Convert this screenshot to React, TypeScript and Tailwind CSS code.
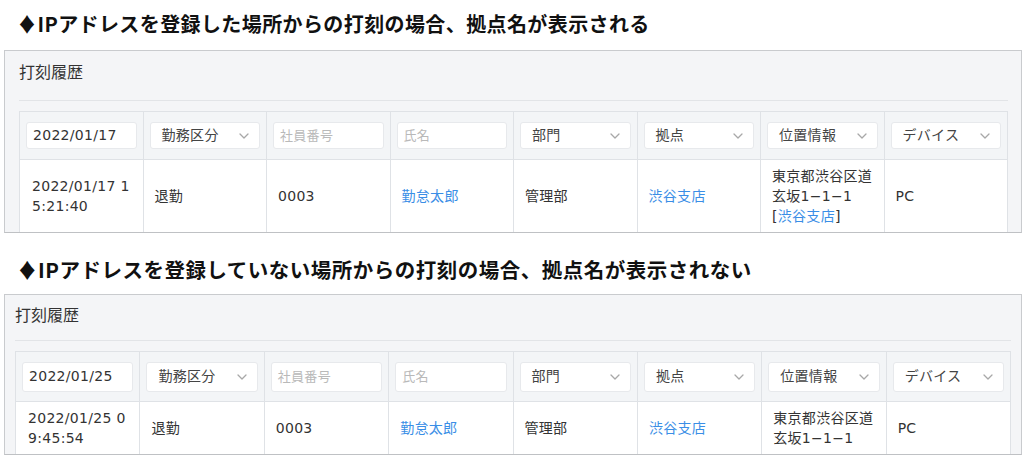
import React from 'react';

const FONT = '"DejaVu Sans", "Noto Sans CJK JP", sans-serif';
const HEAD_FONT = '"Noto Sans CJK JP", "DejaVu Sans", sans-serif';

type HeaderCell =
  | { kind: 'input'; text: string }
  | { kind: 'placeholder'; text: string }
  | { kind: 'select'; text: string };

const Chevron = () => (
  <svg width="10" height="6" viewBox="0 0 10 6" className="shrink-0">
    <path d="M1 1l4 4 4-4" stroke="#a8a8a8" strokeWidth="1.3" fill="none" strokeLinecap="round" strokeLinejoin="round" />
  </svg>
);

const headerCells = (date: string): HeaderCell[] => [
  { kind: 'input', text: date },
  { kind: 'select', text: '勤務区分' },
  { kind: 'placeholder', text: '社員番号' },
  { kind: 'placeholder', text: '氏名' },
  { kind: 'select', text: '部門' },
  { kind: 'select', text: '拠点' },
  { kind: 'select', text: '位置情報' },
  { kind: 'select', text: 'デバイス' },
];

type PanelProps = {
  date: string;
  time: [string, string];
  showBase: boolean;
  boxClass: string;
  titleClass: string;
  headRowClass: string;
  inputClass: string;
  dataRowClass: string;
};

const Panel = ({ date, time, showBase, boxClass, titleClass, headRowClass, inputClass, dataRowClass }: PanelProps) => {
  const cellBorder = 'border-r border-[#dfe2e6] whitespace-nowrap';
  return (
    <div className={`ml-[4px] mr-[2px] border border-[#c9cbce] border-b-[#bfc1c4] bg-[#f4f5f7] ${boxClass}`}>
      <div className={`text-[16px] leading-[24px] text-[#333] border-b border-[#e2e4e7] ${titleClass}`}>打刻履歴</div>
      <div className="border-l border-t border-[#dfe2e6]">
        <div className={`grid grid-cols-8 border-b border-[#dfe2e6] bg-[#f3f5f7] ${headRowClass}`}>
          {headerCells(date).map((c, i) => (
            <div key={i} className={`${cellBorder} px-[6px] flex items-center`}>
              <div className={`w-full bg-white border border-[#e7e9ec] rounded-[3px] flex items-center justify-between text-[14px] tracking-[0.3px] ${inputClass} ${c.kind === 'select' ? 'pl-[11px] pr-[10px]' : 'px-[6px]'}`}>
                <span className={c.kind === 'placeholder' ? 'text-[#b9b9b9] text-[13px]' : c.kind === 'select' ? 'text-[#444]' : 'text-[#333]'}>
                  {c.text}
                </span>
                {c.kind === 'select' && <Chevron />}
              </div>
            </div>
          ))}
        </div>
        <div className={`grid grid-cols-8 bg-white text-[14px] leading-[20px] tracking-[0.3px] text-[#333] ${dataRowClass}`}>
          <div className={`${cellBorder} px-[12px] flex items-center`}>
            <span>
              {time[0]}
              <br />
              {time[1]}
            </span>
          </div>
          <div className={`${cellBorder} px-[11px] flex items-center`}>退勤</div>
          <div className={`${cellBorder} px-[11px] flex items-center`}>0003</div>
          <div className={`${cellBorder} px-[11px] flex items-center text-[#3a8ee6]`}>勤怠太郎</div>
          <div className={`${cellBorder} px-[11px] flex items-center`}>管理部</div>
          <div className={`${cellBorder} px-[11px] flex items-center text-[#3a8ee6]`}>渋谷支店</div>
          <div className={`${cellBorder} px-[11px] flex items-center`}>
            <span>
              東京都渋谷区道
              <br />
              玄坂1−1−1
              {showBase && (
                <>
                  <br />[<span className="text-[#3a8ee6]">渋谷支店</span>]
                </>
              )}
            </span>
          </div>
          <div className={`${cellBorder} px-[11px] flex items-center`}>PC</div>
        </div>
      </div>
    </div>
  );
};

const Heading = ({ children, className }: { children: React.ReactNode; className: string }) => (
  <h2
    className={`pl-[17px] leading-[28px] font-bold text-[#111] ${className}`}
    style={{ fontFamily: HEAD_FONT }}
  >
    {children}
  </h2>
);

export default function App() {
  return (
    <div className="w-[1024px] h-[458px] overflow-hidden bg-white" style={{ fontFamily: FONT }}>
      <Heading className="text-[20px] tracking-[0.4px] pt-[10px] mb-[12px]">
        ♦IPアドレスを登録した場所からの打刻の場合、拠点名が表示される
      </Heading>
      <Panel
        date="2022/01/17"
        time={['2022/01/17 1', '5:21:40']}
        showBase
        boxClass="pl-[14px] pr-[13px]"
        titleClass="pt-[10px] pb-[15px] mb-[10px]"
        headRowClass="h-[48px]"
        inputClass="h-[27px]"
        dataRowClass="h-[72px]"
      />
      <Heading className="text-[20.5px] tracking-[0.5px] mt-[22px] mb-[11px]">
        ♦IPアドレスを登録していない場所からの打刻の場合、拠点名が表示されない
      </Heading>
      <Panel
        date="2022/01/25"
        time={['2022/01/25 0', '9:45:54']}
        showBase={false}
        boxClass="pl-[10px] pr-[10px]"
        titleClass="pt-[9px] pb-[12px] mb-[10px]"
        headRowClass="h-[50px]"
        inputClass="h-[30px]"
        dataRowClass="h-[52px]"
      />
    </div>
  );
}
